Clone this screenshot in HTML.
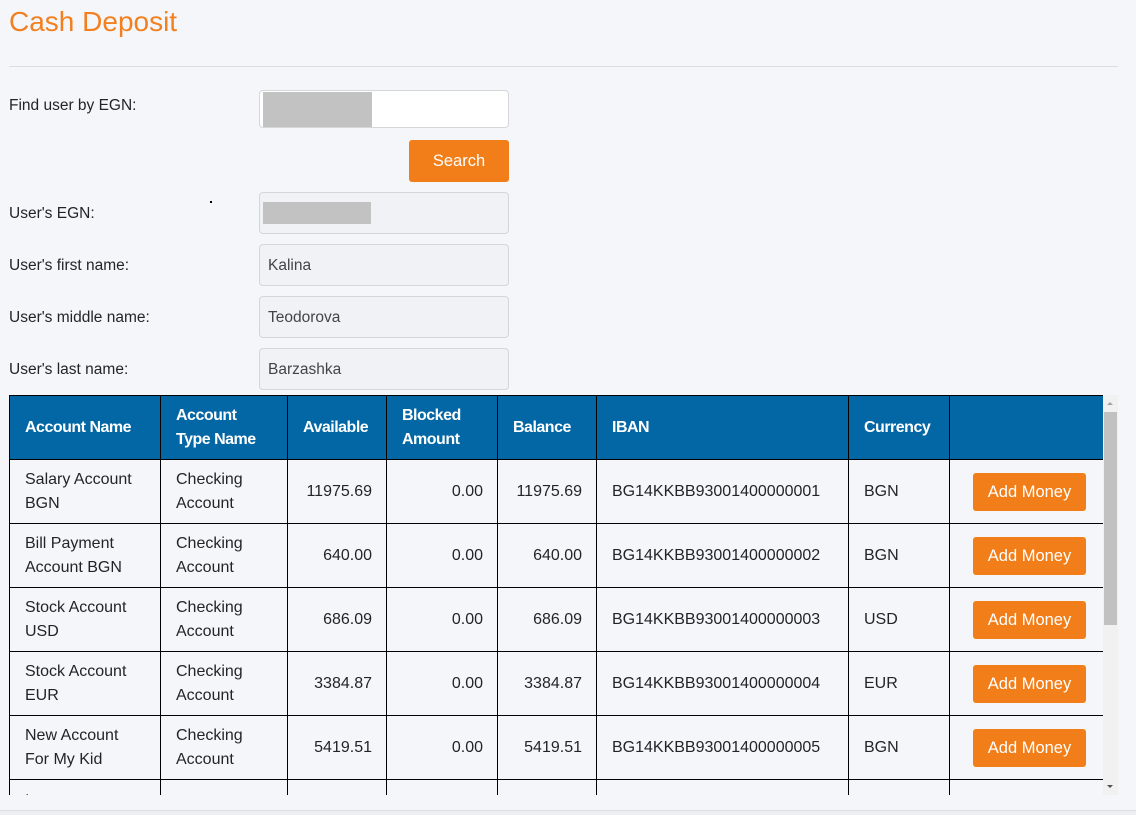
<!DOCTYPE html>
<html><head><style>
body{margin:0;background:#f5f6fa;font-family:"Liberation Sans",sans-serif;color:#212529;width:1136px;height:814px;overflow:hidden;position:relative}
h1{position:absolute;left:9px;top:6px;margin:0;font-weight:400;font-size:28px;color:#f28021}
.hr{position:absolute;left:9px;top:66px;width:1109px;height:1px;background:#dcdde2}
.lbl{position:absolute;left:9px;font-size:15.5px}
.inp{position:absolute;left:259px;width:250px;height:42px;border:1px solid #d4d6da;border-radius:4px;background:#f1f2f5;box-sizing:border-box;font-size:15.5px;padding:12px 8px;color:#444}
.gray{position:absolute;background:#c2c2c2}
.btn{background:#f27e19;color:#fff;border-radius:3px;font-size:16.5px;text-align:center}
.wrap{position:absolute;left:9px;top:395px;width:1094px;height:400px;overflow:hidden}
table{border-collapse:collapse;table-layout:fixed;width:1094px;position:absolute;left:0;top:0}
td,th{border:1px solid #000;padding:0 14px 0 15px;font-size:16px;height:64px;box-sizing:border-box;line-height:24px}
th{background:#0467a5;color:#fff;text-align:left;font-weight:bold;font-size:16px;letter-spacing:-0.5px}
td.n{text-align:right}
.sb{position:absolute;left:1103px;top:395px;width:15px;height:400px;background:#f1f1f1}
</style></head><body>
<h1>Cash Deposit</h1>
<div class="hr"></div>
<div class="lbl" style="top:97px">Find user by EGN:</div>
<div class="inp" style="top:90px;height:38px;background:#fff"></div>
<div class="gray" style="left:263px;top:92px;width:109px;height:35px"></div>
<div class="btn" style="position:absolute;left:409px;top:140px;width:100px;height:42px;line-height:42px">Search</div>
<div class="lbl" style="top:205px">User's EGN:</div>
<div style="position:absolute;left:210px;top:201px;width:2px;height:2px;background:#000"></div>
<div class="inp" style="top:192px"></div>
<div class="gray" style="left:263px;top:202px;width:108px;height:22px"></div>
<div class="lbl" style="top:257px">User's first name:</div>
<div class="inp" style="top:244px">Kalina</div>
<div class="lbl" style="top:309px">User's middle name:</div>
<div class="inp" style="top:296px">Teodorova</div>
<div class="lbl" style="top:361px">User's last name:</div>
<div class="inp" style="top:348px">Barzashka</div>
<div class="wrap"><table>
<colgroup><col style="width:151px"><col style="width:127px"><col style="width:99px"><col style="width:111px"><col style="width:99px"><col style="width:252px"><col style="width:101px"><col style="width:154px"></colgroup>
<tr><th>Account Name</th><th>Account<br>Type Name</th><th>Available</th><th>Blocked<br>Amount</th><th>Balance</th><th>IBAN</th><th>Currency</th><th style="border-right:none"></th></tr>
<tr><td>Salary Account<br>BGN</td><td>Checking<br>Account</td><td class="n">11975.69</td><td class="n">0.00</td><td class="n">11975.69</td><td>BG14KKBB93001400000001</td><td>BGN</td><td style="border-right:none;padding-left:23px"><div class="btn" style="width:113px;height:38px;line-height:38px">Add Money</div></td></tr>
<tr><td>Bill Payment<br>Account BGN</td><td>Checking<br>Account</td><td class="n">640.00</td><td class="n">0.00</td><td class="n">640.00</td><td>BG14KKBB93001400000002</td><td>BGN</td><td style="border-right:none;padding-left:23px"><div class="btn" style="width:113px;height:38px;line-height:38px">Add Money</div></td></tr>
<tr><td>Stock Account<br>USD</td><td>Checking<br>Account</td><td class="n">686.09</td><td class="n">0.00</td><td class="n">686.09</td><td>BG14KKBB93001400000003</td><td>USD</td><td style="border-right:none;padding-left:23px"><div class="btn" style="width:113px;height:38px;line-height:38px">Add Money</div></td></tr>
<tr><td>Stock Account<br>EUR</td><td>Checking<br>Account</td><td class="n">3384.87</td><td class="n">0.00</td><td class="n">3384.87</td><td>BG14KKBB93001400000004</td><td>EUR</td><td style="border-right:none;padding-left:23px"><div class="btn" style="width:113px;height:38px;line-height:38px">Add Money</div></td></tr>
<tr><td>New Account<br>For My Kid</td><td>Checking<br>Account</td><td class="n">5419.51</td><td class="n">0.00</td><td class="n">5419.51</td><td>BG14KKBB93001400000005</td><td>BGN</td><td style="border-right:none;padding-left:23px"><div class="btn" style="width:113px;height:38px;line-height:38px">Add Money</div></td></tr>
<tr><td style="vertical-align:top">.</td><td></td><td></td><td></td><td></td><td></td><td></td><td style="border-right:none"></td></tr>
</table></div>
<div class="sb"><div style="position:absolute;left:1px;top:17px;width:13px;height:213px;background:#c1c1c1"></div>
<div style="position:absolute;left:4px;top:7px;border:3px solid transparent;border-bottom:3px solid #a3a3a3;border-top:none"></div>
<div style="position:absolute;left:4px;top:390px;border:3px solid transparent;border-top:3px solid #505050;border-bottom:none"></div></div>
<div style="position:absolute;left:0;top:810px;width:1136px;height:4px;background:#eceef2;border-top:1px solid #dcdde2"></div>
</body></html>
